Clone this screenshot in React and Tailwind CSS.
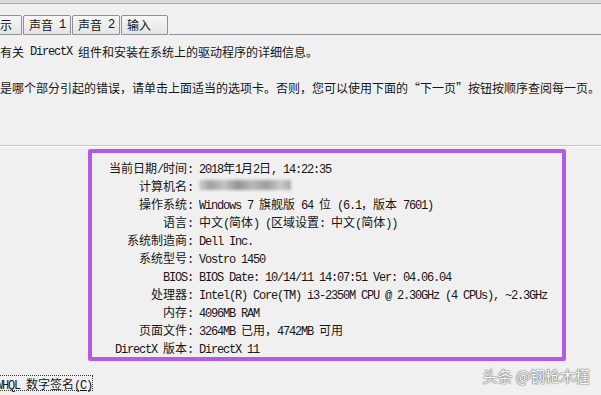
import React from 'react';

const CJK_SPLIT = /([\u2e80-\u9fff\u3000-\u303f\uff00-\uffef\u201c\u201d]+)/;
const CJK_TEST = /[\u2e80-\u9fff\u3000-\u303f\uff00-\uffef\u201c\u201d]/;

// SimSun-like mix: CJK glyphs 12px wide, latin glyphs 6px wide
function T({ s }) {
  return s
    .split(CJK_SPLIT)
    .filter(Boolean)
    .map((part, i) =>
      CJK_TEST.test(part) ? (
        <span key={i} className="font-['Noto_Sans_CJK_SC',sans-serif] text-[12px]">
          {part}
        </span>
      ) : (
        <span key={i} className="font-['Liberation_Mono',monospace] text-[12px] tracking-[-1.2px] whitespace-pre">
          {part}
        </span>
      )
    );
}

const rows = [
  ['当前日期/时间:', '2018年1月2日, 14:22:35'],
  ['计算机名:', null],
  ['操作系统:', 'Windows 7 旗舰版 64 位 (6.1，版本 7601)'],
  ['语言:', '中文(简体) (区域设置: 中文(简体))'],
  ['系统制造商:', 'Dell Inc.'],
  ['系统型号:', 'Vostro 1450'],
  ['BIOS:', 'BIOS Date: 10/14/11 14:07:51 Ver: 04.06.04'],
  ['处理器:', 'Intel(R) Core(TM) i3-2350M CPU @ 2.30GHz (4 CPUs), ~2.3GHz'],
  ['内存:', '4096MB RAM'],
  ['页面文件:', '3264MB 已用，4742MB 可用'],
  ['DirectX 版本:', 'DirectX 11'],
];

function Tab({ label, className }) {
  return (
    <div
      className={`h-[20px] border border-[#8d9096] rounded-t-[2px] bg-[linear-gradient(#f7f7f7,#e4e4e4)] px-[5px] flex items-center text-[#111] whitespace-nowrap ${className}`}
    >
      <T s={label} />
    </div>
  );
}

export default function App() {
  return (
    <div className="relative w-[601px] h-[395px] overflow-hidden bg-[#f0f0f0] text-[#161616]">
      {/* window top edge */}
      <div className="h-[15px] border-t-[3px] border-[#dcdcdc]">
        <div className="h-px bg-[#a9a9a9]" />
      </div>

      {/* tabs */}
      <div className="h-[20px] flex items-end gap-[1px]">
        <Tab label="显示" className="ml-[-18px] w-[40px] shrink-0" />
        <Tab label="声音 1" className="w-[48px] shrink-0" />
        <Tab label="声音 2" className="w-[48px] shrink-0" />
        <Tab label="输入" className="w-[47px] shrink-0" />
        <div className="flex-1 h-px bg-[#8d9096]" />
      </div>

      {/* description */}
      <div className="pt-[8px] leading-[18px] whitespace-nowrap">
        <div className="h-[18px] flex items-center">
          <T s="有关 DirectX 组件和安装在系统上的驱动程序的详细信息。" />
        </div>
        <div className="h-[18px]" />
        <div className="h-[18px] flex items-center">
          <T s="是哪个部分引起的错误，请单击上面适当的选项卡。否则，您可以使用下面的“下一页”按钮按顺序查阅每一页。" />
        </div>
      </div>

      {/* separator */}
      <div className="mt-[48px] h-px bg-[#c4c4c4]" />
      <div className="h-px bg-white" />

      {/* system info box */}
      <div className="mt-[2px] ml-[88px] w-[478px] h-[212px] border-4 border-[#b25ce6] rounded-[2px] pt-[5px]">
        {rows.map(([label, value]) => (
          <div key={label} className="h-[18px] flex items-center whitespace-nowrap">
            <div className="w-[101px] shrink-0 text-right">
              <T s={label} />
            </div>
            <div className="ml-[6px]">
              {value ? (
                <T s={value} />
              ) : (
                <div className="w-[92px] h-[10px] blur-[1.5px] bg-[linear-gradient(90deg,#d0d0d0,#a0a0a0_12%,#c4c4c4_28%,#929292_42%,#b8b8b8_58%,#9c9c9c_74%,#c8c8c8_88%,#a8a8a8)]" />
              )}
            </div>
          </div>
        ))}
      </div>

      {/* WHQL checkbox label with focus rect */}
      <div className="mt-[14px] ml-[-5px] w-[98px] h-[16px] border border-dotted border-[#333] flex items-center whitespace-nowrap">
        <span>
          <T s="WHQL 数字签名(" />
          <span className="underline font-['Liberation_Mono',monospace] text-[12px] tracking-[-1.2px]">C</span>
          <T s=")" />
        </span>
      </div>

      {/* watermark */}
      <div className="absolute right-[11px] bottom-[8px] font-['Noto_Sans_CJK_SC',sans-serif] text-[15px] text-[#f7f7f7] [text-shadow:0_0_1px_#6f6f6f,0_0_1px_#6f6f6f,0_0_2px_#8a8a8a] whitespace-nowrap">
        头条 @钢枪木槿
      </div>
    </div>
  );
}
